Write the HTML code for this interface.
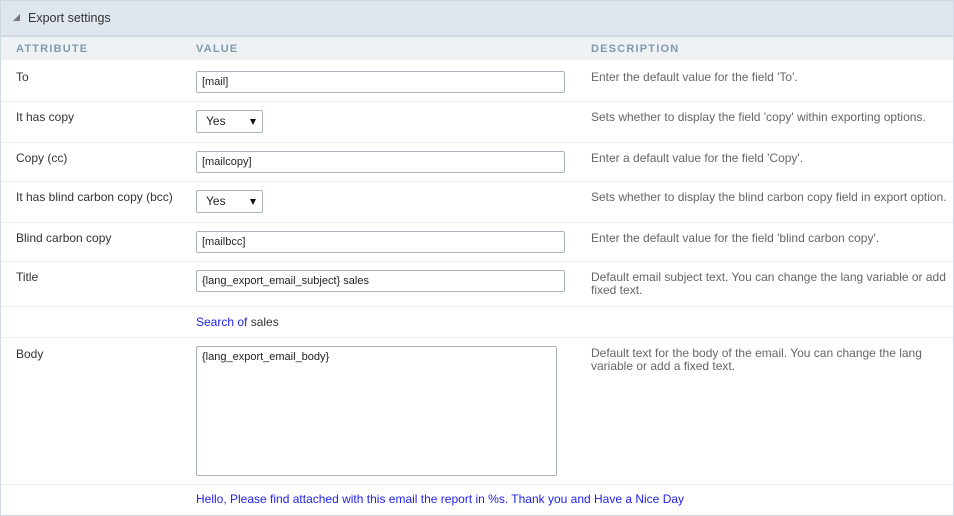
<!DOCTYPE html>
<html><head><style>
body{margin:0;width:954px;height:516px;background:#fff;font-family:"Liberation Sans",Arial,sans-serif;font-size:12px;color:#333;position:relative;overflow:hidden}
.a{position:absolute;white-space:nowrap}
.hr{position:absolute;left:1px;width:952px;height:1px;background:#eceff2}
.inp{position:absolute;left:196px;border:1px solid #a9b3bd;border-radius:2px;box-sizing:border-box;width:369px;height:22px;font-size:11px;line-height:20px;padding-left:5px;color:#222}
.sel{position:absolute;left:196px;width:67px;height:23px;border:1px solid #a9b3bd;border-radius:2px;box-sizing:border-box;font-size:12px;line-height:21px;padding-left:9px;color:#222}
.sel:after{content:"";position:absolute;right:6px;top:8px;border-left:3.5px solid transparent;border-right:3.5px solid transparent;border-top:6px solid #111}
.d{position:absolute;left:591px;color:#666;line-height:13px}
.l{position:absolute;left:16px;color:#333}
</style></head><body>
<div style="position:absolute;left:0;top:0;width:954px;height:516px;box-sizing:border-box;border:1px solid #cfd9e3"></div>
<div style="position:absolute;left:1px;top:1px;width:952px;height:34px;background:#dfe6ee;border-bottom:2px solid #cfd9e3"></div>
<div class="a" style="left:13px;top:14px;width:0;height:0;border-left:7px solid transparent;border-bottom:7px solid #777"></div>
<div class="a" style="left:28px;top:11px;font-size:12.5px;color:#333">Export settings</div>
<div style="position:absolute;left:1px;top:37px;width:952px;height:23px;background:#eef2f5"></div>
<div class="a" style="left:16px;top:43px;font-size:11px;letter-spacing:1.2px;color:#7f9aab;font-weight:bold">ATTRIBUTE</div>
<div class="a" style="left:196px;top:43px;font-size:11px;letter-spacing:1.2px;color:#7f9aab;font-weight:bold">VALUE</div>
<div class="a" style="left:591px;top:43px;font-size:11px;letter-spacing:1.2px;color:#7f9aab;font-weight:bold">DESCRIPTION</div>

<div class="l" style="top:70px">To</div>
<div class="inp" style="top:71px">[mail]</div>
<div class="d" style="top:71px">Enter the default value for the field 'To'.</div>
<div class="hr" style="top:101px"></div>

<div class="l" style="top:110px">It has copy</div>
<div class="sel" style="top:110px">Yes</div>
<div class="d" style="top:111px">Sets whether to display the field 'copy' within exporting options.</div>
<div class="hr" style="top:142px"></div>

<div class="l" style="top:151px">Copy (cc)</div>
<div class="inp" style="top:151px">[mailcopy]</div>
<div class="d" style="top:152px">Enter a default value for the field 'Copy'.</div>
<div class="hr" style="top:181px"></div>

<div class="l" style="top:190px">It has blind carbon copy (bcc)</div>
<div class="sel" style="top:190px">Yes</div>
<div class="d" style="top:191px">Sets whether to display the blind carbon copy field in export option.</div>
<div class="hr" style="top:222px"></div>

<div class="l" style="top:231px">Blind carbon copy</div>
<div class="inp" style="top:231px">[mailbcc]</div>
<div class="d" style="top:232px">Enter the default value for the field 'blind carbon copy'.</div>
<div class="hr" style="top:261px"></div>

<div class="l" style="top:270px">Title</div>
<div class="inp" style="top:270px">{lang_export_email_subject} sales</div>
<div class="d" style="top:271px">Default email subject text. You can change the lang variable or add<br>fixed text.</div>
<div class="hr" style="top:306px"></div>

<div class="a" style="left:196px;top:315px"><span style="color:#2222ee">Search of</span> sales</div>
<div class="hr" style="top:337px"></div>

<div class="l" style="top:347px">Body</div>
<div style="position:absolute;left:196px;top:346px;width:361px;height:130px;box-sizing:border-box;border:1px solid #a9b3bd;border-radius:2px;font-size:11px;padding:4px 5px;color:#222">{lang_export_email_body}</div>
<div class="d" style="top:347px">Default text for the body of the email. You can change the lang<br>variable or add a fixed text.</div>
<div class="hr" style="top:484px"></div>

<div class="a" style="left:196px;top:492px;color:#2222ee">Hello, Please find attached with this email the report in %s. Thank you and Have a Nice Day</div>
</body></html>
